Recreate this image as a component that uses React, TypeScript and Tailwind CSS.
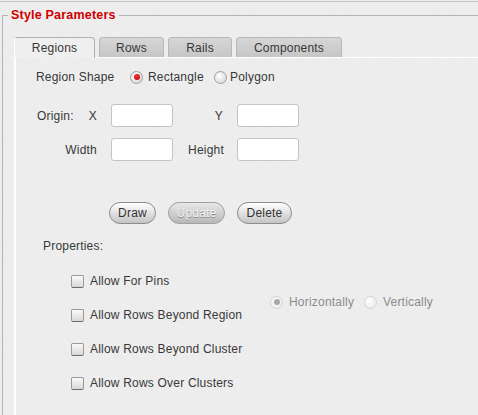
const font = { fontFamily: '"Liberation Sans", Arial, sans-serif' };

const Radio = ({ checked = false, disabled = false }: { checked?: boolean; disabled?: boolean }) => (
  <span
    className={`inline-flex h-[13px] w-[13px] shrink-0 items-center justify-center rounded-full border ${
      disabled
        ? "border-[#d4d4d4] bg-[radial-gradient(circle_at_40%_35%,#ffffff,#e4e4e4)]"
        : "border-[#a0a0a0] bg-[radial-gradient(circle_at_40%_35%,#ffffff,#d0d0d0)]"
    }`}
  >
    {checked && (
      <span
        className={`h-[6px] w-[6px] rounded-full ${
          disabled ? "bg-[#a8a8a8]" : "bg-[radial-gradient(circle_at_40%_35%,#ff3030,#c00000)]"
        }`}
      />
    )}
  </span>
);

const Checkbox = () => (
  <span className="h-[13px] w-[13px] shrink-0 rounded-[2px] border border-[#9a9a9a] border-b-[#6a6a6a] bg-gradient-to-b from-[#fafafa] to-[#d8d8d8]" />
);

const Field = () => (
  <div className="h-[23px] w-[62px] rounded-[3px] border border-[#c4c4c4] bg-white" />
);

const Button = ({ label, w, disabled = false }: { label: string; w: string; disabled?: boolean }) => (
  <div
    className={`flex h-[22px] items-center justify-center rounded-full border bg-gradient-to-b ${w} ${
      disabled
        ? "border-[#a0a0a0] from-[#e8e8e8] to-[#b8b8b8] text-[#f4f4f4] [text-shadow:0_1px_0_#8a8a8a]"
        : "border-[#8c8c8c] from-[#ffffff] to-[#c4c4c4] text-[#333]"
    }`}
  >
    {label}
  </div>
);

const tabs = [
  { label: "Regions", w: "w-[81px]", active: true },
  { label: "Rows", w: "w-[65px]" },
  { label: "Rails", w: "w-[64px]" },
  { label: "Components", w: "w-[106px]" },
];

const checks = [
  "Allow For Pins",
  "Allow Rows Beyond Region",
  "Allow Rows Beyond Cluster",
  "Allow Rows Over Clusters",
];

export default function App() {
  return (
    <div
      style={font}
      className="h-[415px] w-[478px] overflow-hidden bg-[#eeeeee] bg-[repeating-linear-gradient(45deg,#efefef_0px,#efefef_1px,#ebebeb_1px,#ebebeb_2px)] text-[12px] tracking-[0.2px] text-[#383838]"
    >
      <div className="mt-px h-px bg-[#c4c4c4]" />
      <fieldset className="ml-[2px] mt-[6px] h-[420px] border-l border-t border-[#b4b4b4]">
        <legend className="ml-[5px] px-[3px] text-[12.5px] font-bold leading-[14px] tracking-[0.2px] text-[#d00000]">
          Style Parameters
        </legend>

        <div className="mt-[14px] pl-[11px]">
          {/* tab strip */}
          <div className="relative z-10 flex h-[21px] items-end gap-[4px]">
            {tabs.map((t) =>
              t.active ? (
                <div
                  key={t.label}
                  className={`-mb-px flex h-[21px] items-center justify-center rounded-t-[4px] border border-b-0 border-[#b0b0b0] border-l-white bg-[#efefef] ${t.w}`}
                >
                  {t.label}
                </div>
              ) : (
                <div
                  key={t.label}
                  className={`flex h-[20px] items-center justify-center rounded-t-[4px] border border-b-0 border-[#b8b8b8] bg-gradient-to-b from-[#d6d6d6] to-[#c6c6c6] ${t.w}`}
                >
                  {t.label}
                </div>
              )
            )}
          </div>

          {/* panel */}
          <div className="h-[400px] border-l-2 border-t border-white pl-[20px] pt-[9px]">
            <div className="flex h-[20px] items-center">
              <span className="w-[94px]">Region Shape</span>
              <Radio checked />
              <span className="ml-[5px] w-[66px]">Rectangle</span>
              <Radio />
              <span className="ml-[3px]">Polygon</span>
            </div>

            <div className="mt-[17px] flex items-center">
              <div className="flex w-[75px] items-center pl-px pr-[14px]">
                <span>Origin:</span>
                <span className="ml-auto">X</span>
              </div>
              <Field />
              <div className="w-[64px] pr-[14px] text-right">Y</div>
              <Field />
            </div>

            <div className="mt-[11px] flex items-center">
              <div className="w-[75px] pr-[14px] text-right">Width</div>
              <Field />
              <div className="w-[64px] pr-[13px] text-right">Height</div>
              <Field />
            </div>

            <div className="ml-[73px] mt-[41px] flex gap-[12px]">
              <Button label="Draw" w="w-[47px]" />
              <Button label="Update" w="w-[57px]" disabled />
              <Button label="Delete" w="w-[55px]" />
            </div>

            <div className="ml-[7px] mt-[15px] leading-[14px]">Properties:</div>

            <div className="ml-[35px] mt-[18px] flex">
              <div className="flex w-[199px] flex-col gap-[14px]">
                {checks.map((c) => (
                  <div key={c} className="flex h-[20px] items-center">
                    <Checkbox />
                    <span className="ml-[6px] whitespace-nowrap">{c}</span>
                  </div>
                ))}
              </div>
              <div className="mt-[21px] flex h-[20px] items-center text-[#8c8c8c]">
                <Radio checked disabled />
                <span className="ml-[6px] w-[75px]">Horizontally</span>
                <Radio disabled />
                <span className="ml-[6px]">Vertically</span>
              </div>
            </div>
          </div>
        </div>
      </fieldset>
    </div>
  );
}
